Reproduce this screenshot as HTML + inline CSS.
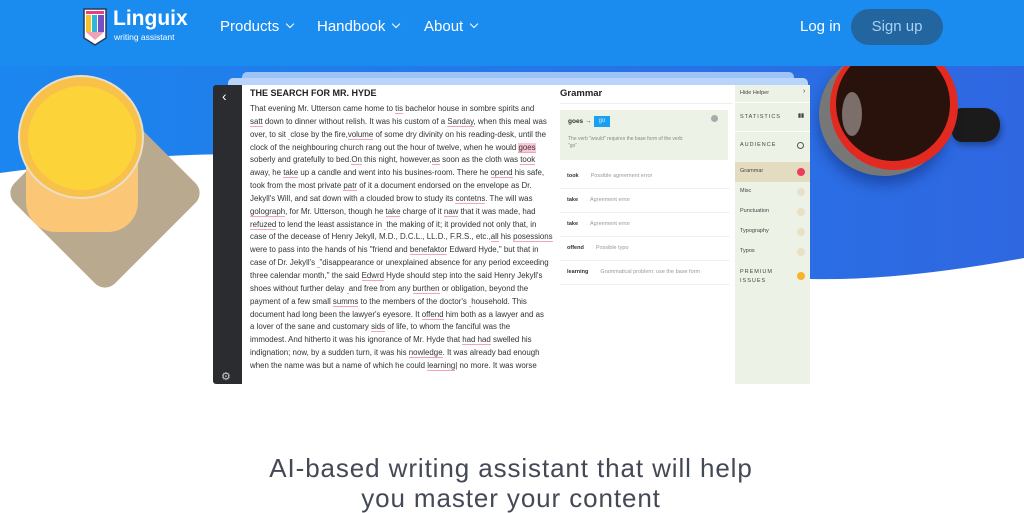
<!DOCTYPE html>
<html><head><meta charset="utf-8"><style>
*{margin:0;padding:0;box-sizing:border-box}
body{width:1024px;height:512px;overflow:hidden;background:#fff;font-family:"Liberation Sans",sans-serif;position:relative}
.abs{position:absolute}
.nav{left:0;top:0;width:1024px;height:66px;background:#1a8cf0;z-index:5}
.z{z-index:6}
.chev{display:inline-block;width:6px;height:6px;border-right:1.5px solid #fff;border-bottom:1.5px solid #fff;transform:rotate(45deg);margin-left:8px;position:relative;top:-4px}
.txt{left:250px;top:103px;width:300px;font-size:7.9px;line-height:12.85px;color:#333;white-space:nowrap}
.u{border-bottom:1px solid #f4a4b8}
.gp{left:556px;top:85px;width:179px;height:299px;background:#fff}
.side{left:735px;top:85px;width:75px;height:299px;background:#edf2e6}
.si{position:absolute;left:5px;font-size:5.5px;color:#444}
.b{position:absolute;right:5px;width:8px;height:8px;border-radius:50%;background:#e8e1c8}
.row{position:absolute;left:4px;width:170px;height:24px;border-bottom:1px solid #f0f0f0;font-size:5.5px;color:#999}
.row b{color:#333;display:inline-block;margin-left:7px;margin-right:12px;position:relative;top:8px}
.row span{position:relative;top:8px}
</style></head><body>
<div class="abs nav"></div>
<svg class="abs" style="left:0;top:66px" width="1024" height="230">
<defs><linearGradient id="g" x1="0" x2="1"><stop offset="0" stop-color="#1b86ef"/><stop offset="1" stop-color="#2f67e1"/></linearGradient></defs>
<path d="M0 0H1024V192Q900 215 810 213Q500 180 300 92Q200 80 0 107Z" fill="url(#g)"/>
</svg>
<!-- logo -->
<svg class="abs z" style="left:83px;top:8px" width="24" height="38" viewBox="0 0 24 38">
<path d="M1 1H23V30L12 37L1 30Z" fill="#fff" stroke="#2a3a55" stroke-width="1.5"/>
<rect x="3" y="3" width="18" height="3" fill="#e8407a"/>
<rect x="3" y="7" width="5" height="17" fill="#f6c22b"/><rect x="9" y="7" width="5" height="17" fill="#2fb6d9"/><rect x="15" y="7" width="6" height="17" fill="#7b4fc4"/>
<path d="M3 24L12 32L21 24Z" fill="#f2a0b5"/>
</svg>
<div class="abs z" style="left:113px;top:7px;color:#fff;font-size:21px;font-weight:bold">Linguix</div>
<div class="abs z" style="left:114px;top:32px;color:#fff;font-size:8.5px">writing assistant</div>
<a class="abs z" style="left:220px;top:18px;color:#fff;font-size:15px">Products<i class="chev"></i></a>
<a class="abs z" style="left:317px;top:18px;color:#fff;font-size:15px">Handbook<i class="chev"></i></a>
<a class="abs z" style="left:424px;top:18px;color:#fff;font-size:15px">About<i class="chev"></i></a>
<div class="abs z" style="left:800px;top:18px;color:#fff;font-size:15px">Log in</div>
<div class="abs z" style="left:851px;top:9px;width:92px;height:36px;border-radius:18px;background:#23669f;color:#a9d0f5;font-size:15px;text-align:center;line-height:36px">Sign up</div>
<!-- juice -->
<div class="abs" style="left:34px;top:122px;width:142px;height:142px;background:#b9a98e;border-radius:14px;transform:rotate(45deg)"></div>
<div class="abs" style="left:26px;top:130px;width:112px;height:102px;border-radius:0 0 30px 30px;background:#fbc676"></div>
<div class="abs" style="left:18px;top:75px;width:126px;height:124px;border-radius:50%;background:#f8c24a;border:2px solid #e9dfcc"></div>
<div class="abs" style="left:28px;top:86px;width:108px;height:104px;border-radius:50%;background:#fcd43a"></div>
<!-- mug -->
<div class="abs" style="left:952px;top:108px;width:48px;height:34px;border-radius:10px 16px 16px 10px;background:#1b1b1b;box-shadow:2px 4px 6px rgba(0,0,0,.3)"></div>
<div class="abs" style="left:819px;top:52px;width:130px;height:124px;border-radius:50%;background:#777;box-shadow:0 8px 14px rgba(0,20,80,.4)"></div>
<div class="abs" style="left:830px;top:42px;width:128px;height:128px;border-radius:50%;background:#e22a20"></div>
<div class="abs" style="left:836px;top:47px;width:114px;height:114px;border-radius:50%;background:#2a120c"></div>
<div class="abs" style="left:842px;top:92px;width:20px;height:44px;border-radius:50%;background:#a09694;opacity:.7"></div>
<!-- editor ghosts -->
<div class="abs" style="left:242px;top:72px;width:552px;height:20px;background:#9ec3f6;border-radius:5px"></div>
<div class="abs" style="left:228px;top:78px;width:580px;height:20px;background:#b9d4fa;border-radius:5px"></div>
<div class="abs" style="left:213px;top:85px;width:29px;height:299px;background:#2b2c30;border-radius:3px 0 0 3px"></div>
<div class="abs" style="left:222px;top:88px;color:#fff;font-size:14px">‹</div>
<div class="abs" style="left:221px;top:370px;color:#ccc;font-size:11px">⚙</div>
<div class="abs" style="left:242px;top:85px;width:314px;height:299px;background:#fff"></div>
<div class="abs" style="left:250px;top:88px;font-size:9px;font-weight:bold;color:#222">THE SEARCH FOR MR. HYDE</div>
<div class="abs txt">
That evening Mr. Utterson came home to <span class="u">tis</span> bachelor house in sombre spirits and<br>
<span class="u">satt</span> down to dinner without relish. It was his custom of a <span class="u">Sanday</span>, when this meal was<br>
over, to sit <span class="u">&nbsp;</span>close by the fire,<span class="u">volume</span> of some dry divinity on his reading-desk, until the<br>
clock of the neighbouring church rang out the hour of twelve, when he would <span class="u" style="background:#f9c9d5">goes</span><br>
soberly and gratefully to bed.<span class="u">On</span> this night, however,<span class="u">as</span> soon as the cloth was <span class="u">took</span><br>
away, he <span class="u">take</span> up a candle and went into his busines-room. There he <span class="u">opend</span> his safe,<br>
took from the most private <span class="u">patr</span> of it a document endorsed on the envelope as Dr.<br>
Jekyll's Will, and sat down with a clouded brow to study its <span class="u">contetns</span>. The will was<br>
<span class="u">golograph</span>, for Mr. Utterson, though he <span class="u">take</span> charge of it <span class="u">naw</span> that it was made, had<br>
<span class="u">refuzed</span> to lend the least assistance in <span class="u">&nbsp;</span>the making of it; it provided not only that, in<br>
case of the decease of Henry Jekyll, M.D., D.C.L., LL.D., F.R.S., etc.,<span class="u">all</span> his <span class="u">posessions</span><br>
were to pass into the hands of his "friend and <span class="u">benefaktor</span> Edward Hyde," but that in<br>
case of Dr. Jekyll's <span class="u">&nbsp;</span>"disappearance or unexplained absence for any period exceeding<br>
three calendar month," the said <span class="u">Edwrd</span> Hyde should step into the said Henry Jekyll's<br>
shoes without further delay <span class="u">&nbsp;</span>and free from any <span class="u">burthen</span> or obligation, beyond the<br>
payment of a few small <span class="u">summs</span> to the members of the doctor's <span class="u">&nbsp;</span>household. This<br>
document had long been the lawyer's eyesore. It <span class="u">offend</span> him both as a lawyer and as<br>
a lover of the sane and customary <span class="u">sids</span> of life, to whom the fanciful was the<br>
immodest. And hitherto it was his ignorance of Mr. Hyde that <span class="u">had had</span> swelled his<br>
indignation; now, by a sudden turn, it was his <span class="u">nowledge</span>. It was already bad enough<br>
when the name was but a name of which he could <span class="u">learning</span>| no more. It was worse
</div>
<div class="abs gp">
<div style="position:absolute;left:4px;top:3px;font-size:9.5px;font-weight:bold;color:#222">Grammar</div>
<div style="position:absolute;left:4px;top:18px;width:172px;height:1px;background:#eee"></div>
<div style="position:absolute;left:4px;top:25px;width:168px;height:50px;background:#edf2e6">
<span style="position:absolute;left:8px;top:8px;font-size:6.5px;font-weight:bold;color:#333">goes →</span>
<span style="position:absolute;left:34px;top:6px;width:16px;height:11px;background:#1aa0f0;color:#cdeaff;font-size:6px;text-align:center;line-height:11px">go</span>
<span style="position:absolute;left:8px;top:26px;font-size:5px;color:#888;line-height:7px">The verb "would" requires the base form of the verb:<br>"go"</span>
<span style="position:absolute;right:10px;top:5px;width:7px;height:7px;border-radius:50%;background:#aaa"></span>
</div>
<div class="row" style="top:80px"><b>took</b><span>Possible agreement error</span></div>
<div class="row" style="top:104px"><b>take</b><span>Agreement error</span></div>
<div class="row" style="top:128px"><b>take</b><span>Agreement error</span></div>
<div class="row" style="top:152px"><b>offend</b><span>Possible typo</span></div>
<div class="row" style="top:176px"><b>learning</b><span>Grammatical problem: use the base form</span></div>
</div>
<div class="abs side">
<div class="si" style="top:5px">Hide Helper</div><div class="si" style="left:68px;top:3px;font-size:7px">›</div>
<div style="position:absolute;left:0;top:17px;width:75px;height:1px;background:#fff"></div>
<div class="si" style="top:29px;letter-spacing:1px">STATISTICS</div><div class="si" style="left:63px;top:28px;font-weight:bold">▮▮</div>
<div style="position:absolute;left:0;top:46px;width:75px;height:1px;background:#fff"></div>
<div class="si" style="top:57px;letter-spacing:1px">AUDIENCE</div><div style="position:absolute;left:62px;top:57px;width:7px;height:7px;border:1.5px solid #555;border-radius:50%"></div>
<div style="position:absolute;left:0;top:77px;width:75px;height:20px;background:#e4dcc1"></div>
<div class="si" style="top:83px">Grammar</div><div class="b" style="top:83px;background:#f03b5e"></div>
<div class="si" style="top:103px">Misc</div><div class="b" style="top:103px"></div>
<div class="si" style="top:123px">Punctuation</div><div class="b" style="top:123px"></div>
<div class="si" style="top:143px">Typography</div><div class="b" style="top:143px"></div>
<div class="si" style="top:163px">Typos</div><div class="b" style="top:163px"></div>
<div class="si" style="top:183px;letter-spacing:1px;line-height:9px">PREMIUM<br>ISSUES</div><div class="b" style="top:187px;background:#f7b42a"></div>
</div>
<div class="abs" style="left:0;top:453px;width:1022px;text-align:center;font-size:26px;line-height:30px;letter-spacing:0.9px;color:#444956">AI-based writing assistant that will help<br>you master your content</div>
</body></html>
